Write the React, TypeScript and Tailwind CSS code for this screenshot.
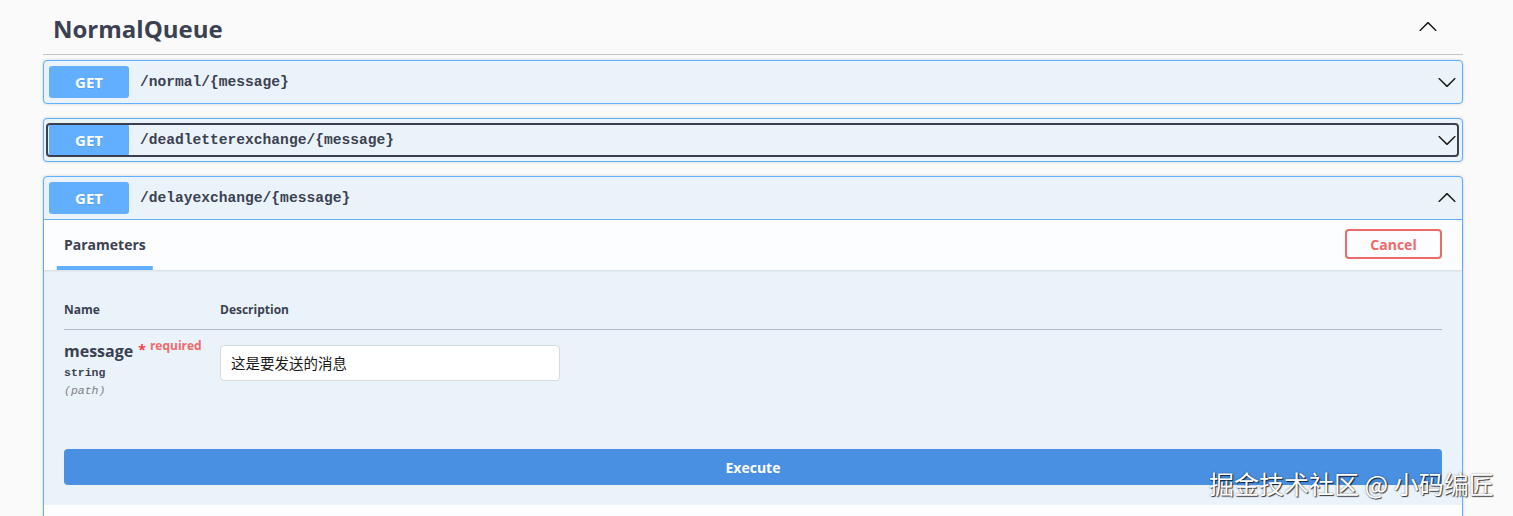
import React from "react";

const SANS = "font-['Open_Sans','Noto_Sans','Noto_Sans_CJK_SC',sans-serif]";
const MONO = "font-['Liberation_Mono','DejaVu_Sans_Mono',monospace]";

function Chevron({ up, className }: { up?: boolean; className?: string }) {
  return (
    <svg
      viewBox="0 0 20 20"
      width="20"
      height="20"
      className={(up ? "rotate-180 " : "") + (className ?? "")}
    >
      <path
        d="M17.418 6.109c.272-.268.709-.268.979 0s.271.701 0 .969l-7.908 7.83c-.27.268-.707.268-.979 0l-7.908-7.83c-.27-.268-.27-.701 0-.969.271-.268.709-.268.979 0L10 13.25l7.418-7.141z"
        fill="#1b1b1b"
      />
    </svg>
  );
}

function Badge() {
  return (
    <div
      className={`${SANS} flex h-[32px] w-[80px] shrink-0 items-center justify-center rounded-[3px] bg-[#61affe] text-[15px] font-bold text-white [text-shadow:0_1px_0_rgba(0,0,0,0.1)]`}
    >
      GET
    </div>
  );
}

function Summary({ path, up }: { path: string; up?: boolean }) {
  return (
    <div className="flex items-center">
      <Badge />
      <span className={`${MONO} ml-[11px] mt-[2px] text-[14.6px] font-semibold text-[#3b4151]`}>{path}</span>
      <div className="flex-1" />
      <Chevron up={up} />
    </div>
  );
}

export default function App() {
  return (
    <div className={`${SANS} relative min-h-[516px] w-full overflow-hidden bg-[#fafafa]`}>
      <div className="ml-[43px] w-[1420px]">
        {/* Tag heading */}
        <div className="flex h-[55px] items-center border-b border-[#c4c5c9] pl-[10px] pr-[25px]">
          <h3 className="mt-[3px] flex-1 text-[24px] font-bold text-[#3b4151]">NormalQueue</h3>
          <Chevron up />
        </div>

        {/* Block 1 */}
        <div className="mt-[5px] rounded-[4px] border border-[#61affe] bg-[#ebf3fa] p-[5px] shadow-[0_0_3px_rgba(0,0,0,0.19)]">
          <Summary path="/normal/{message}" />
        </div>

        {/* Block 2 (focused) */}
        <div className="relative mt-[14px] rounded-[4px] border border-[#61affe] bg-[#ebf3fa] p-[5px] shadow-[0_0_3px_rgba(0,0,0,0.19)]">
          <Summary path="/deadletterexchange/{message}" />
          <div className="pointer-events-none absolute bottom-[4px] left-[2px] right-[3px] top-[4px] rounded-[4px] border-2 border-[#3b4151]" />
        </div>

        {/* Block 3 (expanded) */}
        <div className="mt-[14px] rounded-[4px] border border-[#61affe] bg-[#ebf3fa] shadow-[0_0_3px_rgba(0,0,0,0.19)]">
          <div className="border-b border-[#61affe] p-[5px]">
            <Summary path="/delayexchange/{message}" up />
          </div>

          {/* tab header */}
          <div className="flex h-[50px] items-center justify-between bg-white/80 px-5 shadow-[0_1px_2px_rgba(0,0,0,0.1)]">
            <div className="relative flex h-full items-center">
              <span className="mt-[-1px] text-[14px] font-bold text-[#3b4151]">Parameters</span>
              <div className="absolute bottom-0 left-1/2 h-[4px] w-[118%] -translate-x-1/2 bg-[#61affe]" />
            </div>
            <button className="mt-[-2px] flex h-[30px] w-[97px] items-center justify-center rounded-[4px] border-2 border-[#ef6a6a] bg-transparent text-[14px] font-bold text-[#ef6a6a]">
              Cancel
            </button>
          </div>

          {/* parameters table */}
          <div className="h-[179px] px-5 pt-5">
            <div className="flex border-b border-[#b3bac6] text-[12px] font-bold leading-[15px] text-[#3b4151]">
              <div className="w-[156px] py-3">Name</div>
              <div className="py-3">Description</div>
            </div>
            <div className="flex pt-[10px]">
              <div className="w-[156px]">
                <div className="flex items-start leading-[22px]">
                  <span className="text-[16px] font-bold text-[#3b4151]">message</span>
                  <span className="ml-[5px] mt-[1px] text-[14px] font-bold leading-[18px] text-[#f93e3e]">*</span>
                  <span className="ml-[4px] mt-[-5px] text-[12px] font-bold text-[#ef6a6a]">required</span>
                </div>
                <div className={`${MONO} mt-[4px] text-[11.5px] font-bold leading-[14px] text-[#3b4151]`}>string</div>
                <div className={`${MONO} mt-[4px] text-[11.5px] italic leading-[14px] text-[#7d7f85]`}>(path)</div>
              </div>
              <div className="pt-[5px]">
                <div className="flex h-[36px] w-[340px] items-center rounded-[4px] border border-[#d9d9d9] bg-white px-[10px] font-['Noto_Sans_CJK_SC',sans-serif] text-[14.5px] text-[#1a1a1a]">
                  这是要发送的消息
                </div>
              </div>
            </div>
          </div>

          {/* execute */}
          <div className="px-5 pb-5">
            <button className="flex h-[36px] w-full items-center justify-center rounded-[4px] bg-[#4990e2] text-[14px] font-bold text-white">
              Execute
            </button>
          </div>

          <div className="h-[120px] bg-white/80" />
        </div>
      </div>

      {/* watermark */}
      <div className="pointer-events-none absolute left-[1209px] top-[467px] whitespace-nowrap font-['Noto_Sans_CJK_SC',sans-serif] text-[25px] leading-[32px] text-white [text-shadow:1px_1px_1px_rgba(0,0,0,0.75),0_0_2px_rgba(0,0,0,0.45)]">
        掘金技术社区 @ 小码编匠
      </div>
    </div>
  );
}
